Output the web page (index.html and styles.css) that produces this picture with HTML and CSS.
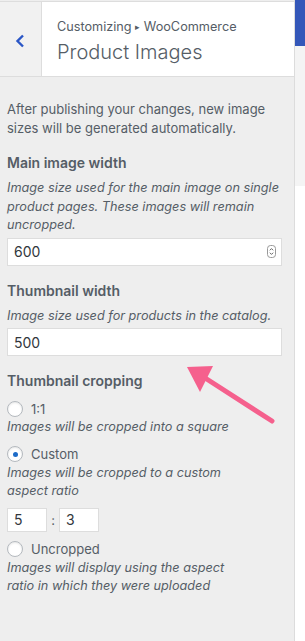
FILE: index.html
```html
<!DOCTYPE html>
<html lang="en">
<head>
    <meta charset="UTF-8">
    <meta name="viewport" content="width=device-width, initial-scale=1.0">
    <title>Product Images</title>
    <link rel="stylesheet" href="styles.css">
</head>
<body>
    <div class="layout">
        <div class="sidebar">
            <div class="header">
                <button class="back" aria-label="Back">
                    <svg width="10" height="14" viewBox="0 0 10 14"><path d="M8 1.5 L2.5 7 L8 12.5" fill="none" stroke="#2a56c6" stroke-width="2.4"/></svg>
                </button>
                <div class="title">
                    <div class="crumb">Customizing <span class="sep">&#9656;</span> WooCommerce</div>
                    <div class="heading">Product Images</div>
                </div>
            </div>

            <div class="content">
                <p class="intro">After publishing your changes, new image sizes will be generated automatically.</p>

                <div class="field">
                    <div class="label">Main image width</div>
                    <div class="desc">Image size used for the main image on single product pages. These images will remain uncropped.</div>
                    <div class="number-box">
                        <span>600</span>
                        <svg class="spinner" width="9" height="13" viewBox="0 0 9 13"><rect x="0.5" y="0.5" width="8" height="12" rx="3" fill="#fff" stroke="#999"/><path d="M2.8 5.3 L4.5 3.6 L6.2 5.3 M2.8 7.7 L4.5 9.4 L6.2 7.7" fill="none" stroke="#555" stroke-width="0.9"/></svg>
                    </div>
                </div>

                <div class="field">
                    <div class="label">Thumbnail width</div>
                    <div class="desc">Image size used for products in the catalog.</div>
                    <div class="number-box"><span>500</span></div>
                </div>

                <div class="field">
                    <div class="label">Thumbnail cropping</div>
                    <div class="options">
                        <div class="option">
                            <div class="radio-row"><span class="radio"></span>1:1</div>
                            <div class="desc">Images will be cropped into a square</div>
                        </div>
                        <div class="option">
                            <div class="radio-row"><span class="radio checked"></span>Custom</div>
                            <div class="desc">Images will be cropped to a custom aspect ratio</div>
                            <div class="ratio">
                                <span class="small-box">5</span>
                                <span class="colon">:</span>
                                <span class="small-box">3</span>
                            </div>
                        </div>
                        <div class="option">
                            <div class="radio-row"><span class="radio"></span>Uncropped</div>
                            <div class="desc">Images will display using the aspect ratio in which they were uploaded</div>
                        </div>
                    </div>
                </div>
            </div>

            <svg class="arrow" width="100" height="70" viewBox="0 0 100 70">
                <line x1="92" y1="61" x2="22" y2="16" stroke="#f5608d" stroke-width="5" stroke-linecap="round"/>
                <polygon points="7,7 33,6 20,32" fill="#f5608d"/>
            </svg>
        </div>
        <div class="preview">
            <div class="preview-bar"></div>
            <div class="preview-gray"></div>
        </div>
    </div>
</body>
</html>
```

FILE: styles.css
```css
body {
    margin: 0;
    font-family: Inter, 'Noto Sans', Arial, sans-serif;
    color: #555d66;
    background-color: #fff;
}
.layout {
    display: flex;
    height: 641px;
    overflow: hidden;
}
.sidebar {
    position: relative;
    width: 294px;
    flex-shrink: 0;
    background-color: #eee;
    border-right: 1px solid #dcdcdc;
}
.header {
    display: flex;
    height: 74px;
    margin-top: 1px;
    border-top: 1px solid #ddd;
    border-bottom: 1px solid #ddd;
    background-color: #fff;
}
.back {
    width: 42px;
    padding: 0;
    border: none;
    border-right: 1px solid #ddd;
    background-color: #f1f1f1;
    display: flex;
    align-items: center;
    justify-content: center;
    padding-top: 4px;
    padding-right: 2px;
}
.title {
    padding: 16px 0 0 15px;
}
.crumb {
    font-size: 12.7px;
    line-height: 18px;
}
.sep {
    font-size: 9px;
    position: relative;
    top: -1px;
}
.heading {
    font-size: 20px;
    font-weight: 300;
    line-height: 28px;
    margin-top: 1px;
}
.content {
    padding: 23px 12px 0 7px;
}
.intro {
    margin: 0;
    font-size: 13px;
    line-height: 19px;
}
.field {
    margin-top: 15px;
}
.label {
    font-size: 14px;
    font-weight: 600;
    line-height: 20px;
}
.desc {
    font-size: 12.7px;
    font-style: italic;
    line-height: 18.5px;
}
.field > .desc {
    margin-top: 6px;
}
.number-box {
    display: flex;
    align-items: center;
    justify-content: space-between;
    height: 26px;
    margin-top: 3px;
    padding: 0 5px 0 6px;
    background-color: #fff;
    border: 1px solid #ddd;
    font-size: 14px;
    color: #32373c;
}
.spinner {
    display: block;
}
.options {
    margin-top: 8px;
}
.option {
    margin-bottom: 8px;
}
.option .desc {
    max-width: 235px;
}
.radio-row {
    display: flex;
    align-items: center;
    gap: 8px;
    height: 19px;
    font-size: 13px;
}
.radio {
    width: 14px;
    height: 14px;
    border: 1px solid #b4b9be;
    border-radius: 50%;
    background-color: #fff;
    box-shadow: inset 0 1px 2px rgba(0, 0, 0, 0.1);
    display: flex;
    align-items: center;
    justify-content: center;
}
.radio.checked::before {
    content: '';
    width: 5px;
    height: 5px;
    border-radius: 50%;
    background-color: #1e6cc8;
}
.ratio {
    display: flex;
    align-items: center;
    margin-top: 7px;
    margin-bottom: 8px;
}
.small-box {
    width: 32px;
    height: 22px;
    padding-left: 6px;
    background-color: #fff;
    border: 1px solid #ddd;
    font-size: 14px;
    line-height: 22px;
    color: #32373c;
}
.colon {
    width: 12px;
    text-align: center;
    font-size: 13px;
}
.arrow {
    position: absolute;
    left: 180px;
    top: 360px;
}
.preview {
    flex: 1;
    background-color: #fff;
}
.preview-bar {
    height: 46px;
    background-color: #3457b9;
}
.preview-gray {
    height: 140px;
    background-color: #f4f4f4;
}
```
